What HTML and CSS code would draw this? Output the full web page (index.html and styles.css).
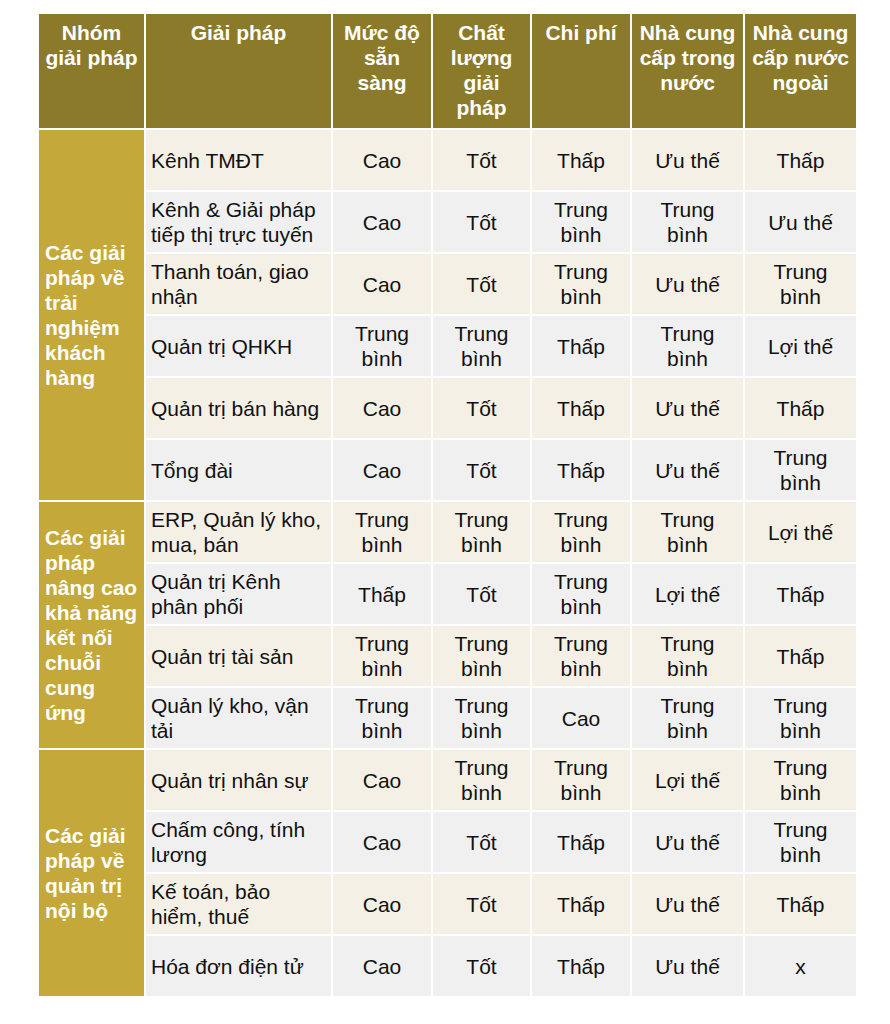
FILE: index.html
```html
<!DOCTYPE html>
<html lang="vi">
<head>
<meta charset="utf-8">
<title>Bảng giải pháp</title>
<link rel="stylesheet" href="styles.css">
</head>
<body>
<div class="page">
<table class="grid">
<colgroup>
<col class="c-group"><col class="c-sol"><col class="c-n"><col class="c-n2"><col class="c-n"><col class="c-w"><col class="c-w">
</colgroup>
<thead>
<tr>
<th>Nhóm<br>giải pháp</th>
<th>Giải pháp</th>
<th>Mức độ<br>sẵn<br>sàng</th>
<th>Chất<br>lượng<br>giải<br>pháp</th>
<th>Chi phí</th>
<th>Nhà cung<br>cấp trong<br>nước</th>
<th>Nhà cung<br>cấp nước<br>ngoài</th>
</tr>
</thead>
<tbody>
<tr class="odd">
<td class="group" rowspan="6">Các giải<br>pháp về<br>trải<br>nghiệm<br>khách<br>hàng</td>
<td class="sol">Kênh TMĐT</td><td>Cao</td><td>Tốt</td><td>Thấp</td><td>Ưu thế</td><td>Thấp</td>
</tr>
<tr class="even">
<td class="sol">Kênh &amp; Giải pháp<br>tiếp thị trực tuyến</td><td>Cao</td><td>Tốt</td><td>Trung<br>bình</td><td>Trung<br>bình</td><td>Ưu thế</td>
</tr>
<tr class="odd">
<td class="sol">Thanh toán, giao<br>nhận</td><td>Cao</td><td>Tốt</td><td>Trung<br>bình</td><td>Ưu thế</td><td>Trung<br>bình</td>
</tr>
<tr class="even">
<td class="sol">Quản trị QHKH</td><td>Trung<br>bình</td><td>Trung<br>bình</td><td>Thấp</td><td>Trung<br>bình</td><td>Lợi thế</td>
</tr>
<tr class="odd">
<td class="sol">Quản trị bán hàng</td><td>Cao</td><td>Tốt</td><td>Thấp</td><td>Ưu thế</td><td>Thấp</td>
</tr>
<tr class="even">
<td class="sol">Tổng đài</td><td>Cao</td><td>Tốt</td><td>Thấp</td><td>Ưu thế</td><td>Trung<br>bình</td>
</tr>
<tr class="odd">
<td class="group" rowspan="4">Các giải<br>pháp<br>nâng cao<br>khả năng<br>kết nối<br>chuỗi<br>cung<br>ứng</td>
<td class="sol">ERP, Quản lý kho,<br>mua, bán</td><td>Trung<br>bình</td><td>Trung<br>bình</td><td>Trung<br>bình</td><td>Trung<br>bình</td><td>Lợi thế</td>
</tr>
<tr class="even">
<td class="sol">Quản trị Kênh<br>phân phối</td><td>Thấp</td><td>Tốt</td><td>Trung<br>bình</td><td>Lợi thế</td><td>Thấp</td>
</tr>
<tr class="odd">
<td class="sol">Quản trị tài sản</td><td>Trung<br>bình</td><td>Trung<br>bình</td><td>Trung<br>bình</td><td>Trung<br>bình</td><td>Thấp</td>
</tr>
<tr class="even">
<td class="sol">Quản lý kho, vận<br>tải</td><td>Trung<br>bình</td><td>Trung<br>bình</td><td>Cao</td><td>Trung<br>bình</td><td>Trung<br>bình</td>
</tr>
<tr class="odd">
<td class="group" rowspan="4">Các giải<br>pháp về<br>quản trị<br>nội bộ</td>
<td class="sol">Quản trị nhân sự</td><td>Cao</td><td>Trung<br>bình</td><td>Trung<br>bình</td><td>Lợi thế</td><td>Trung<br>bình</td>
</tr>
<tr class="even">
<td class="sol">Chấm công, tính<br>lương</td><td>Cao</td><td>Tốt</td><td>Thấp</td><td>Ưu thế</td><td>Trung<br>bình</td>
</tr>
<tr class="odd">
<td class="sol">Kế toán, bảo<br>hiểm, thuế</td><td>Cao</td><td>Tốt</td><td>Thấp</td><td>Ưu thế</td><td>Thấp</td>
</tr>
<tr class="even">
<td class="sol">Hóa đơn điện tử</td><td>Cao</td><td>Tốt</td><td>Thấp</td><td>Ưu thế</td><td>x</td>
</tr>
</tbody>
</table>
</div>
</body>
</html>
```

FILE: styles.css
```css
html, body {
  margin: 0;
  padding: 0;
  background: #ffffff;
}

.page {
  padding: 12px 0 0 37px;
  font-family: "Liberation Sans", Arial, sans-serif;
}

.grid {
  border-collapse: collapse;
  table-layout: fixed;
  width: 820px;
  font-size: 21px;
  line-height: 25px;
  color: #111111;
}

.c-group { width: 107px; }
.c-sol { width: 187px; }
.c-n { width: 100px; }
.c-n2 { width: 99px; }
.c-w { width: 113px; }

.grid th,
.grid td {
  border: 2px solid #ffffff;
  padding: 0 4px;
  text-align: center;
  vertical-align: middle;
}

.grid thead tr {
  height: 116px;
}

.grid th {
  background: #8c7a2b;
  color: #ffffff;
  font-weight: bold;
  vertical-align: top;
  padding-top: 6px;
}

.grid tbody tr {
  height: 62px;
}

.grid tr.odd td {
  background: #f4f0e6;
}

.grid tr.even td {
  background: #f0f0f0;
}

.grid tr td.group {
  background: #c4a83a;
  color: #ffffff;
  font-weight: bold;
  text-align: left;
  padding-left: 6px;
}

.grid tr td.sol {
  text-align: left;
  padding-left: 5px;
}
```
